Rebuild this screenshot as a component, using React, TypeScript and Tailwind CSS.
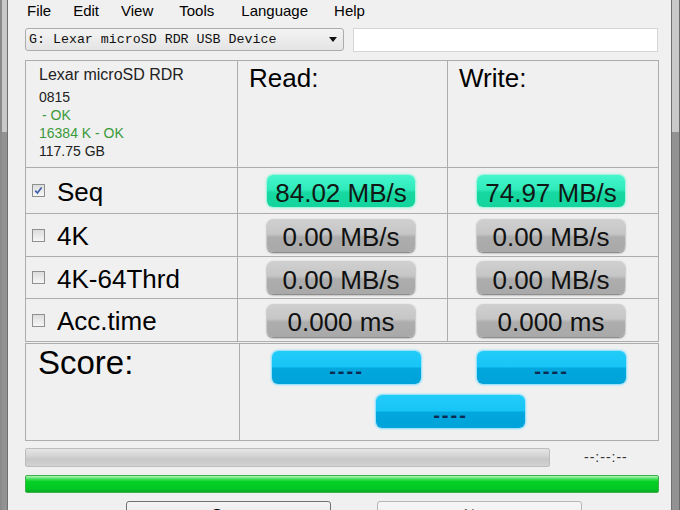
import React from "react";

function CheckBox({ checked }: { checked?: boolean }) {
  return (
    <div className="w-[13px] h-[13px] border border-[#8e8f8f] bg-[linear-gradient(to_bottom,#dcdcdc,#f6f6f6)] flex items-center justify-center shrink-0">
      {checked && (
        <svg width="9" height="9" viewBox="0 0 9 9">
          <path d="M1.3 4.6 L3.4 7 L7.6 1.6" fill="none" stroke="#3b5cab" strokeWidth="1.6" />
        </svg>
      )}
    </div>
  );
}

function GreenPill({ text }: { text: string }) {
  return (
    <div className="w-[148px] h-[32px] rounded-[6px] flex items-center justify-center pt-[4px] text-[26px] leading-[26px] text-[#101816] bg-[linear-gradient(to_bottom,#46f5cd_0%,#30ebbb_45%,#18d8a2_55%,#14d49e_100%)] shadow-[0_0_2px_1px_#8ff5d8]">
      {text}
    </div>
  );
}

function GrayPill({ text }: { text: string }) {
  return (
    <div className="w-[148px] h-[33px] rounded-[6px] flex items-center justify-center pt-[4px] text-[26px] leading-[26px] text-[#111] bg-[linear-gradient(to_bottom,#d0d0d0_0%,#c6c6c6_45%,#adadad_55%,#a9a9a9_100%)] shadow-[0_1px_2px_#6a6a6a]">
      {text}
    </div>
  );
}

function BluePill() {
  return (
    <div className="w-[149px] h-[33px] rounded-[6px] flex items-center justify-center pt-[6px] text-[20px] leading-[20px] font-bold tracking-[2px] text-[#0b2a52] bg-[linear-gradient(to_bottom,#22ccf9_0%,#17c5f6_48%,#02a7de_52%,#00a3da_100%)] shadow-[0_0_2px_1px_#80ddff]">
      ----
    </div>
  );
}

function Frame({ side }: { side: "l" | "r" }) {
  return (
    <div
      className={
        side === "l"
          ? "w-[8px] h-full flex flex-col border-l-2 border-l-[#8a8a8a] border-r border-r-[#6e6e6e] shrink-0"
          : "w-[9px] h-full flex flex-col border-l border-l-[#707070] border-r border-r-[#6a6a6a] shrink-0"
      }
    >
      <div className="h-[132px] bg-[#c9c9c9]" />
      <div className="flex-1 bg-[#929292]" />
    </div>
  );
}

const rows = [
  { label: "Seq", checked: true, read: "84.02 MB/s", write: "74.97 MB/s", green: true },
  { label: "4K", checked: false, read: "0.00 MB/s", write: "0.00 MB/s", green: false },
  { label: "4K-64Thrd", checked: false, read: "0.00 MB/s", write: "0.00 MB/s", green: false },
  { label: "Acc.time", checked: false, read: "0.000 ms", write: "0.000 ms", green: false },
];
const rowH = ["h-[46px]", "h-[43px]", "h-[42px]", "h-[43px]"];

export default function App() {
  const cell = "border-r border-b border-[#adadad]";
  return (
    <div className="w-[680px] h-[510px] overflow-hidden bg-[#f0f0f0] flex font-['Liberation_Sans',Arial,sans-serif] text-black">
      <Frame side="l" />
      <div className="flex-1 min-w-0 overflow-hidden">
        {/* menu */}
        <div className="h-[22px] flex items-center pl-[19px] text-[15px] leading-[22px]">
          <span>File</span>
          <span className="ml-[22px]">Edit</span>
          <span className="ml-[22px]">View</span>
          <span className="ml-[26px]">Tools</span>
          <span className="ml-[27px]">Language</span>
          <span className="ml-[26px]">Help</span>
        </div>
        {/* drive selector row */}
        <div className="mt-[6px] ml-[17px] flex items-start">
          <div className="w-[319px] h-[23px] rounded-[3px] border border-[#acacac] bg-[linear-gradient(to_bottom,#f4f4f4,#e4e4e4)] flex items-center pl-[3px] pr-[6px]">
            <span className="flex-1 font-['Liberation_Mono',monospace] text-[13.3px] leading-[20px] text-[#111]">
              G: Lexar microSD RDR USB Device
            </span>
            <svg width="8" height="5" viewBox="0 0 8 5">
              <path d="M0 0 H8 L4 5 Z" fill="#111" />
            </svg>
          </div>
          <div className="ml-[9px] w-[305px] h-[24px] bg-white border border-[#d6d6d6]" />
        </div>
        {/* results grid */}
        <div className="mt-[8px] ml-[17px] w-[634px] border-l border-t border-[#adadad] grid grid-cols-[212px_210px_211px]">
          <div className={`${cell} h-[107px] pl-[13px] pt-[5px]`}>
            <div className="text-[16px] leading-[18px] text-[#222]">Lexar microSD RDR</div>
            <div className="mt-[4px] text-[14px] leading-[18px] text-[#222]">0815</div>
            <div className="text-[14px] leading-[18px] text-[#3a9a3a] pl-[3px]">- OK</div>
            <div className="text-[14px] leading-[18px] text-[#3a9a3a]">16384 K - OK</div>
            <div className="text-[14px] leading-[18px] text-[#222]">117.75 GB</div>
          </div>
          <div className={`${cell} h-[107px] pl-[11px] pt-[2px] text-[26px] leading-[30px]`}>Read:</div>
          <div className={`${cell} h-[107px] pl-[11px] pt-[2px] text-[26px] leading-[30px]`}>Write:</div>
          {rows.map((r, i) => (
            <React.Fragment key={r.label}>
              <div className={`${cell} ${rowH[i]} flex items-center pl-[6px]`}>
                <CheckBox checked={r.checked} />
                <span className="ml-[12px] text-[26px] leading-[30px] pt-[2px]">{r.label}</span>
              </div>
              <div className={`${cell} ${rowH[i]} flex items-center pl-[29px]`}>
                {r.green ? <GreenPill text={r.read} /> : <GrayPill text={r.read} />}
              </div>
              <div className={`${cell} ${rowH[i]} flex items-center pl-[29px]`}>
                {r.green ? <GreenPill text={r.write} /> : <GrayPill text={r.write} />}
              </div>
            </React.Fragment>
          ))}
        </div>
        {/* score box */}
        <div className="mt-[1px] ml-[17px] w-[634px] h-[98px] border border-[#adadad] grid grid-cols-[214px_1fr]">
          <div className="border-r border-[#adadad] pl-[12px] text-[33px] leading-[38px]">Score:</div>
          <div className="pt-[7px]">
            <div className="flex">
              <div className="ml-[32px]">
                <BluePill />
              </div>
              <div className="ml-[56px]">
                <BluePill />
              </div>
            </div>
            <div className="mt-[11px] ml-[136px]">
              <BluePill />
            </div>
          </div>
        </div>
        {/* progress */}
        <div className="mt-[7px] ml-[17px] flex items-center">
          <div className="w-[525px] h-[19px] rounded-[2px] border border-[#bdbdbd] bg-[linear-gradient(to_bottom,#e6e6e6_0%,#d4d4d4_40%,#c8c8c8_60%,#d2d2d2_100%)]" />
          <span className="ml-[34px] text-[14px] tracking-[1px] text-[#333] leading-[19px]">--:--:--</span>
        </div>
        <div className="mt-[8px] ml-[17px] w-[634px] h-[18px] rounded-[2px] border border-[#3db04a] bg-[linear-gradient(to_bottom,#b8f5bc_0%,#3ede55_20%,#06d026_35%,#02c822_80%,#0aa826_100%)]" />
        {/* buttons */}
        <div className="mt-[8px] ml-[118px] flex">
          <div className="w-[205px] h-[30px] rounded-[3px] border border-[#707070] bg-[linear-gradient(to_bottom,#f4f4f4,#e0e0e0)] flex items-center justify-center text-[16px]">
            Start
          </div>
          <div className="ml-[46px] w-[205px] h-[30px] rounded-[3px] border border-[#b5b5b5] bg-[linear-gradient(to_bottom,#f6f6f6,#ececec)] flex items-center justify-center text-[16px] text-[#6d6d6d]">
            Abort
          </div>
        </div>
      </div>
      <Frame side="r" />
    </div>
  );
}
